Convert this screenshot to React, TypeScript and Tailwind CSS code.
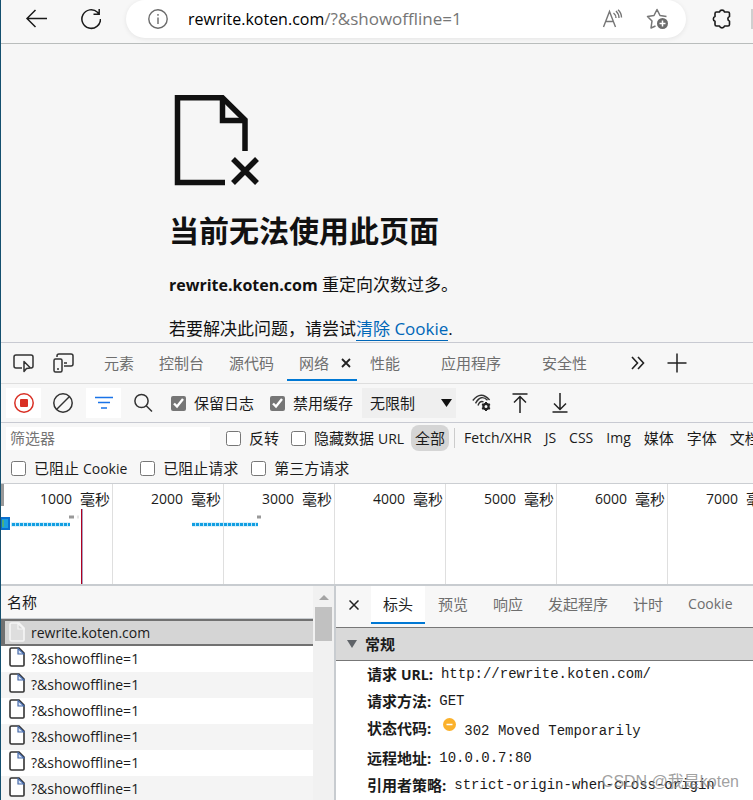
import React from "react";

const requests = Array.from({ length: 6 }, () => "?&showoffline=1");

const ticks = ["1000", "2000", "3000", "4000", "5000", "6000", "7000"];

const detailTabs = ["标头", "预览", "响应", "发起程序", "计时"];

const CheckOption = ({ id, checked = false, children }: { id: string; checked?: boolean; children: React.ReactNode }) => (
  <label htmlFor={id} className="flex shrink-0 items-center gap-2 whitespace-nowrap">
    <input id={id} type="checkbox" defaultChecked={checked} className="size-[15px] shrink-0 accent-[#767676]" />
    <span>{children}</span>
  </label>
);

const FileIcon = ({ selected = false }: { selected?: boolean }) => (
  <svg width="16" height="20" viewBox="0 0 16 20" fill="none" className="mt-px shrink-0 self-start">
    <path
      d="M2.5 1H10L15 6V18Q15 19 14 19H2.5Q1 19 1 17.5V2.5Q1 1 2.5 1Z"
      stroke={selected ? "#f5f5f5" : "#333"}
      strokeWidth="1.6"
      fill={selected ? "#dedede" : "#fff"}
    />
    <path d="M9 1.5V7H15Z" stroke={selected ? "#f5f5f5" : "#4569a8"} strokeWidth="1.2" fill={selected ? "#d6d6d6" : "#dce6f8"} />
  </svg>
);

const BrowserBar = () => (
  <header className="flex h-11 shrink-0 items-start border-b border-[#b9bdbc] bg-[#f7f7f7]">
    <div className="flex w-[125px] shrink-0 items-center gap-8 pt-2 pl-6">
      <button type="button" aria-label="返回">
        <svg width="22" height="22" viewBox="0 0 22 22" fill="none" stroke="#1a1a1a" strokeWidth="1.5">
          <path d="M22 10.5H2M10.5 2L2 10.5L10.5 19" />
        </svg>
      </button>
      <button type="button" aria-label="刷新">
        <svg width="22" height="22" viewBox="0 0 22 22" fill="none" stroke="#1a1a1a" strokeWidth="1.5">
          <path d="M21.5 11A9.3 9.3 0 1 1 18.5 4.2L20 6M20.2 1V6.2H14.5" />
        </svg>
      </button>
    </div>
    <div className="flex h-[38px] min-w-0 flex-1 items-center rounded-full bg-white pr-4 pl-[22px] shadow-[0_1px_5px_rgba(0,0,0,0.08)]">
      <svg width="20" height="20" viewBox="0 0 20 20" fill="none" stroke="#6b6b6b" strokeWidth="1.4" className="shrink-0">
        <circle cx="10" cy="10" r="9.2" />
        <path d="M10 8.5V15M10 5V6.8" />
      </svg>
      <div
        role="textbox"
        aria-label="地址"
        contentEditable
        suppressContentEditableWarning
        spellCheck={false}
        className="ml-5 min-w-0 flex-1 text-[17px] whitespace-nowrap text-[#767676] outline-none"
      >
        <span className="text-base text-black">rewrite.koten.com</span>/?&amp;showoffline=1
      </div>
      <button type="button" aria-label="大声朗读" className="mr-[22px]">
        <svg width="22" height="20" viewBox="0 0 22 20" fill="none" stroke="#767676" strokeWidth="1.4">
          <path d="M1.5 18L7.5 2.5L13.5 18M3.8 12.5H11.3" />
          <path d="M11.5 4Q14 6 14 9M14 2Q17 5 17 9M16 .8Q19.5 4 19.5 8.5" />
        </svg>
      </button>
      <button type="button" aria-label="收藏">
        <svg width="24" height="22" viewBox="0 0 24 22" fill="none" stroke="#767676" strokeWidth="1.5" strokeLinejoin="round">
          <path d="M9.5 18L5 20L6 13L1.5 8.5L8 7.5L11 1.5L14 7.5L20.5 8.5" />
          <circle cx="16.5" cy="15.5" r="5.5" fill="#6b6b6b" stroke="none" />
          <path d="M16.5 12.5V18.5M13.5 15.5H19.5" stroke="#fff" />
        </svg>
      </button>
    </div>
    <div className="flex w-[67px] shrink-0 items-center pt-2 pl-[25px]">
      <button type="button" aria-label="扩展">
        <svg width="20" height="22" viewBox="0 0 20 22" fill="none" stroke="#1a1a1a" strokeWidth="1.6" strokeLinejoin="round">
          <path d="M5.5 4H8.5A2.6 2.6 0 0 1 13.5 4H17Q18.5 4 18.5 5.5V8.5A2.5 2.5 0 0 0 18.5 13.2V16.5Q18.5 18 17 18H13.5A2.6 2.6 0 0 1 8.5 18H5.5Q4 18 4 16.5V13.3A2.5 2.5 0 0 1 4 8.6V5.5Q4 4 5.5 4Z" />
        </svg>
      </button>
      <span className="ml-auto h-5 w-0.5 bg-[#cfcfcf]" />
    </div>
  </header>
);

const ErrorPage = () => (
  <main className="h-[299px] shrink-0 border-b border-[#c8cad2] bg-[#f6f6f6] pl-[168px] text-[17px] text-[#111]">
    <svg width="92" height="92" viewBox="0 0 92 92" fill="none" stroke="#111" strokeWidth="5.5" className="mt-[50px]">
      <path d="M56 88.5H8.5V3.8H53.5L76 26V57" />
      <path d="M53.5 3.8V26.5H76" />
      <path d="M64 65L88 89M88 65L64 89" />
    </svg>
    <h1 className="mt-6 text-[30px] leading-[42px] font-bold">当前无法使用此页面</h1>
    <p className="mt-[21px] leading-[22px]">
      <strong className="text-base">rewrite.koten.com</strong> 重定向次数过多。
    </p>
    <p className="mt-[21px] leading-[22px]">
      若要解决此问题，请尝试
      <a href="#cookies" className="border-b border-[#0067b8] text-[#0067b8]">清除 Cookie</a>.
    </p>
  </main>
);

const DevToolsTabs = () => (
  <nav className="flex h-[41px] shrink-0 items-center overflow-hidden border-b border-[#dedede] text-[#6e6e6e]">
    <button type="button" aria-label="检查" className="ml-3 shrink-0">
      <svg width="22" height="20" viewBox="0 0 22 20" fill="none" stroke="#333" strokeWidth="1.5">
        <path d="M9 15H3Q1 15 1 13V4Q1 2 3 2H18Q20 2 20 4V13Q20 15 18 15" />
        <path d="M11 8.5V18.5L13.5 15.5L17.5 15Z" fill="#f7f7f7" strokeLinejoin="round" />
      </svg>
    </button>
    <button type="button" aria-label="设备" className="ml-[18px] shrink-0">
      <svg width="22" height="20" viewBox="0 0 22 20" fill="none" stroke="#333" strokeWidth="1.5">
        <path d="M4 4V3Q4 1 6 1H18Q20 1 20 3V11Q20 13 18 13H11M11 10H14" />
        <rect x="1" y="6" width="8" height="13" rx="1.5" />
        <path d="M4 16H6" />
      </svg>
    </button>
    <div className="ml-[17px] flex h-full shrink-0 gap-px">
      <button type="button" className="px-3">元素</button>
      <button type="button" className="px-3">控制台</button>
      <button type="button" className="px-3">源代码</button>
      <button type="button" className="relative flex items-center gap-3 pr-1.5 pl-3">
        网络
        <svg width="10" height="10" viewBox="0 0 10 10" stroke="#222" strokeWidth="1.8">
          <path d="M1 1L9 9M9 1L1 9" />
        </svg>
        <span className="absolute inset-x-0 bottom-0.5 h-0.5 bg-[#0078d4]" />
      </button>
      <button type="button" className="pr-7 pl-3">性能</button>
      <button type="button" className="pr-7 pl-3">应用程序</button>
      <button type="button" className="pr-7 pl-3">安全性</button>
    </div>
    <button type="button" aria-label="更多选项卡" className="ml-4 shrink-0">
      <svg width="14" height="14" viewBox="0 0 14 14" fill="none" stroke="#222" strokeWidth="1.6">
        <path d="M1 1L6.5 7L1 13M7 1L12.5 7L7 13" />
      </svg>
    </button>
    <button type="button" aria-label="更多工具" className="ml-[22px] shrink-0">
      <svg width="20" height="20" viewBox="0 0 20 20" stroke="#222" strokeWidth="1.5">
        <path d="M10 .5V19.5M.5 10H19.5" />
      </svg>
    </button>
  </nav>
);

const NetworkToolbar = () => (
  <div className="flex h-[39px] shrink-0 items-center overflow-hidden border-b border-[#c8cad2] pl-[5px]">
    <button type="button" aria-label="停止记录" className="flex h-[30px] w-[35px] shrink-0 items-center justify-center bg-white">
      <svg width="20" height="20" viewBox="0 0 20 20" fill="none" stroke="#d93025" strokeWidth="1.5">
        <circle cx="10" cy="10" r="9.2" />
        <rect x="6" y="6" width="8" height="8" rx="1" fill="#d93025" stroke="none" />
      </svg>
    </button>
    <button type="button" aria-label="清除" className="ml-3 shrink-0">
      <svg width="20" height="20" viewBox="0 0 20 20" fill="none" stroke="#333" strokeWidth="1.5">
        <circle cx="10" cy="10" r="9.2" />
        <path d="M3.5 16.5L16.5 3.5" />
      </svg>
    </button>
    <button type="button" aria-label="筛选" className="ml-[13px] flex h-[30px] w-[35px] shrink-0 items-center justify-center bg-white">
      <svg width="18" height="14" viewBox="0 0 18 14" stroke="#1a73e8" strokeWidth="1.5">
        <path d="M0 1.5H18M3 6.5H15M6 12H12" />
      </svg>
    </button>
    <button type="button" aria-label="搜索" className="ml-3 shrink-0">
      <svg width="20" height="20" viewBox="0 0 20 20" fill="none" stroke="#333" strokeWidth="1.5">
        <circle cx="8.5" cy="8" r="6.6" />
        <path d="M13 12.5L19 18.5" />
      </svg>
    </button>
    <div className="ml-[18px] flex shrink-0 gap-4">
      <CheckOption id="preserve" checked>保留日志</CheckOption>
      <CheckOption id="nocache" checked>禁用缓存</CheckOption>
    </div>
    <div className="relative ml-[9px] shrink-0">
      <select aria-label="限制" className="h-[30px] w-[94px] appearance-none bg-[#efefef] pl-2 outline-none">
        <option>无限制</option>
      </select>
      <svg width="11" height="8" viewBox="0 0 11 8" className="pointer-events-none absolute top-[11px] right-1 fill-[#111]">
        <path d="M0 0H11L5.5 8Z" />
      </svg>
    </div>
    <button type="button" aria-label="网络条件" className="ml-4 shrink-0">
      <svg width="20" height="18" viewBox="0 0 20 18" fill="none" stroke="#333" strokeWidth="1.4">
        <path d="M.8 6.5Q9-3.8 17.6 6M3.5 9.3Q9-.2 15.5 6.3M6 11.5Q7.8 6.5 11.5 7.8" />
        <circle cx="14" cy="12.5" r="2.6" stroke="#222" strokeWidth="2.2" />
        <path
          d="M14 8V10M14 15V17M10.1 10.2L11.8 11.2M16.2 13.8L17.9 14.8M10.1 14.8L11.8 13.8M16.2 11.2L17.9 10.2"
          stroke="#222"
          strokeWidth="2"
        />
      </svg>
    </button>
    <button type="button" aria-label="导入" className="ml-5 shrink-0">
      <svg width="16" height="20" viewBox="0 0 16 20" fill="none" stroke="#222" strokeWidth="1.5">
        <path d="M.5 1H15.5M8 20V4M2 9.5L8 3.5L14 9.5" />
      </svg>
    </button>
    <button type="button" aria-label="导出" className="ml-6 shrink-0">
      <svg width="16" height="20" viewBox="0 0 16 20" fill="none" stroke="#222" strokeWidth="1.5">
        <path d="M.5 19H15.5M8 0V16M2 10.5L8 16.5L14 10.5" />
      </svg>
    </button>
  </div>
);

const FilterBar = () => (
  <div className="h-[61px] shrink-0 overflow-hidden border-b border-[#cbced2]">
    <div className="flex h-[30px] items-center pl-[5px] whitespace-nowrap">
      <input
        type="text"
        aria-label="筛选器"
        placeholder="筛选器"
        className="h-[23px] w-[204px] shrink-0 bg-white px-1 outline-none placeholder:text-[#757575]"
      />
      <div className="ml-4 flex shrink-0 gap-3">
        <CheckOption id="invert">反转</CheckOption>
        <CheckOption id="hide-data">
          隐藏数据 <span className="text-sm">URL</span>
        </CheckOption>
      </div>
      <button type="button" className="ml-[7px] h-[26px] shrink-0 rounded-lg bg-[#d5d5d5] px-1">全部</button>
      <span className="ml-[5px] h-5 w-px shrink-0 bg-[#ccc]" />
      <div className="ml-[9px] flex shrink-0 items-center gap-[13px]">
        <button type="button" className="text-sm">Fetch/XHR</button>
        <button type="button" className="text-sm">JS</button>
        <button type="button" className="text-sm">CSS</button>
        <button type="button" className="text-sm">Img</button>
        <button type="button">媒体</button>
        <button type="button">字体</button>
        <button type="button">文档</button>
      </div>
    </div>
    <div className="flex h-[30px] items-center gap-[13px] pl-2.5">
      <CheckOption id="blocked-cookies">
        已阻止 <span className="text-sm">Cookie</span>
      </CheckOption>
      <CheckOption id="blocked-requests">已阻止请求</CheckOption>
      <CheckOption id="third-party">第三方请求</CheckOption>
    </div>
  </div>
);

const Timeline = () => (
  <div className="relative flex h-[102px] shrink-0 overflow-hidden border-b-2 border-[#c8ccd0] bg-white pl-px">
    {ticks.map((tick) => (
      <div key={tick} className="flex w-[111px] shrink-0 justify-end gap-2 border-r border-[#dfdfdf] pt-1 pr-0.5">
        <span className="text-sm leading-[22px]">{tick}</span>
        <span className="leading-[22px]">毫秒</span>
      </div>
    ))}
    <svg width="340" height="100" viewBox="0 0 340 100" className="absolute top-0 left-0">
      <rect x="0" y="0" width="3" height="22" fill="#999" />
      <rect x="0" y="34" width="8" height="11" fill="#1a9fe0" stroke="#0b6fce" strokeWidth="2" />
      <rect x="1" y="36" width="2" height="7" fill="#4caf7a" />
      <path d="M10 40.5H69M191 40.5H257" stroke="#bfe6f8" strokeWidth="4" />
      <path d="M11 40.5H69M191 40.5H257" stroke="#129fe2" strokeWidth="3" strokeDasharray="3 1" />
      <path d="M68 33H73M256 33H260" stroke="#999" strokeWidth="3" />
      <path d="M76 33H78" stroke="#e5e5e5" strokeWidth="3" />
      <path d="M80.5 25V100" stroke="#b00020" />
      <path d="M81.5 25V100" stroke="#a9a0c0" />
    </svg>
  </div>
);

const RequestList = () => (
  <section className="flex w-[335px] shrink-0 border-r-2 border-[#c8ccd0]">
    <div className="min-w-0 flex-1">
      <h2 className="h-[33px] border-b border-[#c8ccd0] bg-[#f7f7f7] pl-1.5 leading-8">名称</h2>
      <ul className="text-sm">
        <li className="flex h-[27px] items-center gap-1.5 border-y-2 border-l-4 border-[#717171] bg-[#d5d5d5] pl-1">
          <FileIcon selected />
          rewrite.koten.com
        </li>
        {requests.map((name, i) => (
          <li key={i} className="flex h-[26px] items-center gap-1.5 bg-white pl-2 odd:bg-[#f4f4f4]">
            <FileIcon />
            {name}
          </li>
        ))}
      </ul>
    </div>
    <div className="flex w-[21px] shrink-0 flex-col items-center bg-[#f1f1f1] pt-[9px]">
      <svg width="10" height="5" viewBox="0 0 10 5" fill="#a3a3a3">
        <path d="M0 5L5 0L10 5Z" />
      </svg>
      <span className="mt-[7px] h-[34px] w-[17px] bg-[#c1c1c1]" />
    </div>
  </section>
);

const DetailRow = ({ label, value }: { label: React.ReactNode; value: React.ReactNode }) => (
  <div className="flex gap-2 whitespace-nowrap">
    <dt className="font-bold">{label}:</dt>
    <dd className="flex font-['Liberation_Mono',monospace] text-sm leading-[27px]">{value}</dd>
  </div>
);

const RequestDetails = () => (
  <section className="min-w-0 flex-1 overflow-hidden bg-white">
    <nav className="flex h-[42px] items-start border-b border-[#777] bg-[#f7f7f7] text-[#6e6e6e]">
      <button type="button" aria-label="关闭" className="flex h-[38px] w-[35px] shrink-0 items-center justify-center">
        <svg width="10" height="10" viewBox="0 0 10 10" stroke="#222" strokeWidth="1.5">
          <path d="M.5 .5L9.5 9.5M9.5 .5L.5 9.5" />
        </svg>
      </button>
      <div className="flex h-[38px] shrink-0 gap-px">
        {detailTabs.map((tab, i) => (
          <button
            key={tab}
            type="button"
            className={i === 0 ? "border-b-2 border-[#0078d4] bg-white px-3 text-[#222]" : "border-b-2 border-transparent px-3"}
          >
            {tab}
          </button>
        ))}
        <button type="button" className="border-b-2 border-transparent px-3 text-sm">Cookie</button>
      </div>
    </nav>
    <h2 className="flex h-[33px] items-center gap-2 border-b border-[#777] bg-[#d9d9d9] pl-[11px] font-bold">
      <svg width="10" height="8" viewBox="0 0 10 8" fill="#5f6368">
        <path d="M0 0H10L5 8Z" />
      </svg>
      常规
    </h2>
    <dl className="pl-[31px] leading-[27px]">
      <DetailRow label={<>请求 <span className="text-sm">URL</span></>} value="http://rewrite.koten.com/" />
      <DetailRow label="请求方法" value="GET" />
      <DetailRow
        label="状态代码"
        value={
          <span className="flex items-start gap-2">
            <svg width="13" height="13" viewBox="0 0 13 13" className="mt-[3px] ml-1">
              <circle cx="6.5" cy="6.5" r="6.5" fill="#fbb12b" />
              <path d="M3.5 6.5H9.5" stroke="#fff" strokeWidth="1.5" />
            </svg>
            <span className="pt-[3px]">302 Moved Temporarily</span>
          </span>
        }
      />
      <DetailRow label="远程地址" value="10.0.0.7:80" />
      <DetailRow label="引用者策略" value="strict-origin-when-cross-origin" />
    </dl>
  </section>
);

const App: React.FC = () => {
  return (
    <div className="relative flex h-screen flex-col overflow-hidden border-l border-[#14506f] bg-[#f7f7f7] font-['Open_Sans','Noto_Sans_CJK_SC',sans-serif] text-[15px] text-[#1b1b1b]">
      <BrowserBar />
      <ErrorPage />
      <DevToolsTabs />
      <NetworkToolbar />
      <FilterBar />
      <Timeline />
      <div className="flex min-h-0 flex-1">
        <RequestList />
        <RequestDetails />
      </div>
      <span className="absolute right-3.5 bottom-1.5 font-['Liberation_Sans','Noto_Sans_CJK_SC',sans-serif] text-base text-[#888]/80">
        CSDN @我是koten
      </span>
    </div>
  );
};

export default App;
